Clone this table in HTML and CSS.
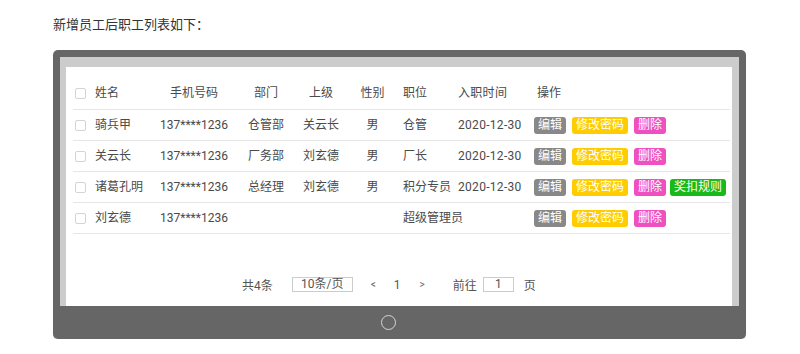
FILE: index.html
```html
<!DOCTYPE html>
<html lang="zh-CN">
  <head>
    <meta charset="UTF-8" />
    <meta name="viewport" content="width=device-width, initial-scale=1.0" />
    <title>职工列表</title>
    <link rel="stylesheet" href="styles.css">
  </head>
  <body>
    <p class="intro">新增员工后职工列表如下：</p>

    <div class="monitor">
      <div class="bezel">
        <div class="screen">
          <table class="staff-table">
            <colgroup>
              <col class="c-check" />
              <col class="c-name" />
              <col class="c-phone" />
              <col class="c-dept" />
              <col class="c-boss" />
              <col class="c-sex" />
              <col class="c-post" />
              <col class="c-date" />
              <col />
            </colgroup>
            <thead>
              <tr>
                <th><span class="checkbox"></span></th>
                <th class="left">姓名</th>
                <th>手机号码</th>
                <th>部门</th>
                <th>上级</th>
                <th>性别</th>
                <th class="left post">职位</th>
                <th class="left date">入职时间</th>
                <th class="left ops-head">操作</th>
              </tr>
            </thead>
            <tbody>
              <tr>
                <td><span class="checkbox"></span></td>
                <td class="left">骑兵甲</td>
                <td>137****1236</td>
                <td>仓管部</td>
                <td>关云长</td>
                <td>男</td>
                <td class="left post">仓管</td>
                <td class="left date">2020-12-30</td>
                <td class="left ops">
                  <span class="btn btn-edit">编辑</span><span class="btn btn-pwd">修改密码</span><span class="btn btn-del">删除</span>
                </td>
              </tr>
              <tr>
                <td><span class="checkbox"></span></td>
                <td class="left">关云长</td>
                <td>137****1236</td>
                <td>厂务部</td>
                <td>刘玄德</td>
                <td>男</td>
                <td class="left post">厂长</td>
                <td class="left date">2020-12-30</td>
                <td class="left ops">
                  <span class="btn btn-edit">编辑</span><span class="btn btn-pwd">修改密码</span><span class="btn btn-del">删除</span>
                </td>
              </tr>
              <tr>
                <td><span class="checkbox"></span></td>
                <td class="left">诸葛孔明</td>
                <td>137****1236</td>
                <td>总经理</td>
                <td>刘玄德</td>
                <td>男</td>
                <td class="left post">积分专员</td>
                <td class="left date">2020-12-30</td>
                <td class="left ops">
                  <span class="btn btn-edit">编辑</span><span class="btn btn-pwd">修改密码</span><span class="btn btn-del">删除</span><span class="btn btn-rule">奖扣规则</span>
                </td>
              </tr>
              <tr>
                <td><span class="checkbox"></span></td>
                <td class="left">刘玄德</td>
                <td>137****1236</td>
                <td></td>
                <td></td>
                <td></td>
                <td class="left post">超级管理员</td>
                <td class="left date"></td>
                <td class="left ops">
                  <span class="btn btn-edit">编辑</span><span class="btn btn-pwd">修改密码</span><span class="btn btn-del">删除</span>
                </td>
              </tr>
            </tbody>
          </table>

          <div class="pager">
            <span class="total">共4条</span>
            <span class="page-size">10条/页</span>
            <span class="arrow prev">&lt;</span>
            <span class="current">1</span>
            <span class="arrow next">&gt;</span>
            <span class="goto">前往</span>
            <span class="goto-box">1</span>
            <span class="goto-unit">页</span>
          </div>
        </div>
      </div>
      <div class="base">
        <span class="power"></span>
      </div>
    </div>
  </body>
</html>
```

FILE: styles.css
```css
body {
  margin: 0;
  padding: 0;
  font-family: Roboto, "Noto Sans CJK SC", sans-serif;
  color: #555;
  background-color: #fff;
}

.intro {
  margin: 0 0 16px 53px;
  padding-top: 16px;
  font-size: 13px;
  line-height: 18px;
  color: #333;
}

/* Monitor frame */
.monitor {
  box-sizing: border-box;
  width: 693px;
  height: 289px;
  margin-left: 53px;
  padding: 7px 7px 0 7px;
  background-color: #666;
  border-radius: 5px;
  box-shadow: 0 1px 1px #ddd;
}

.bezel {
  box-sizing: border-box;
  height: 249px;
  padding: 10px 7px 0 6px;
  background-color: #ccc;
}

.screen {
  box-sizing: border-box;
  height: 239px;
  padding: 0 2px 0 7px;
  background-color: #fff;
}

.base {
  display: flex;
  align-items: center;
  height: 33px;
}

.power {
  box-sizing: border-box;
  width: 15px;
  height: 15px;
  margin-left: 321px;
  border: 1px solid #d6d6d6;
  border-radius: 50%;
}

/* Table */
.staff-table {
  width: 100%;
  table-layout: fixed;
  border-collapse: collapse;
  font-size: 12px;
}

.c-check { width: 22px; }
.c-name { width: 60px; }
.c-phone { width: 78px; }
.c-dept { width: 66px; }
.c-boss { width: 44px; }
.c-sex { width: 59px; }
.c-post { width: 56px; }
.c-date { width: 75px; }

.staff-table th,
.staff-table td {
  padding: 0;
  text-align: center;
  white-space: nowrap;
  border-bottom: 1px solid #e6e6e6;
}

.staff-table th {
  height: 35px;
  padding-bottom: 7px;
  vertical-align: bottom;
  font-weight: normal;
  color: #4a4a4a;
  line-height: 18px;
}

.staff-table td {
  height: 30px;
  line-height: 18px;
  vertical-align: middle;
  color: #4a4a4a;
}

.staff-table .left {
  text-align: left;
}

.staff-table th:first-child,
.staff-table td:first-child {
  text-align: left;
}

.staff-table .post {
  padding-left: 1px;
}

.staff-table .date {
  letter-spacing: 0.3px;
}

.staff-table .ops-head {
  padding-left: 4px;
}

.staff-table .ops {
  padding-left: 1px;
  font-size: 0;
}

.checkbox {
  display: inline-block;
  box-sizing: border-box;
  width: 11px;
  height: 11px;
  margin-left: 2px;
  vertical-align: middle;
  border: 1px solid #d4d4d4;
  border-radius: 2px;
  background: #fff;
}

.btn {
  display: inline-block;
  height: 17px;
  padding: 0 4px;
  margin-right: 6px;
  font-size: 12px;
  line-height: 17px;
  color: #fff;
  border-radius: 3px;
  vertical-align: middle;
}

.btn-edit { background-color: #888; }
.btn-pwd { background-color: #ffcc00; }
.btn-del { background-color: #f04fbf; margin-right: 4px; }
.btn-rule { background-color: #19b919; margin-right: 0; }

/* Pagination */
.pager {
  display: flex;
  align-items: center;
  height: 15px;
  margin-top: 43px;
  padding-left: 169px;
  font-size: 12px;
  color: #555;
}

.page-size,
.goto-box {
  box-sizing: border-box;
  height: 15px;
  line-height: 13px;
  text-align: center;
  border: 1px solid #ccc;
}

.page-size {
  width: 61px;
  margin-left: 19px;
}

.arrow {
  font-size: 10px;
  color: #666;
}

.prev { margin-left: 18px; }
.current { margin-left: 18px; }
.next { margin-left: 19px; }
.goto { margin-left: 28px; }

.goto-box {
  width: 31px;
  margin-left: 6px;
}

.goto-unit { margin-left: 10px; }
```
